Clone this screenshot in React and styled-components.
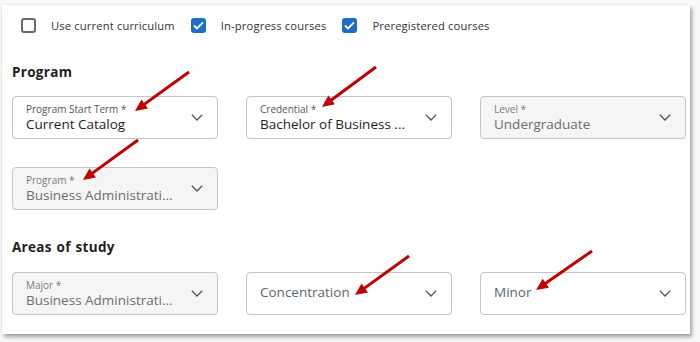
import React from "react";
import styled, { createGlobalStyle } from "styled-components";

const Global = createGlobalStyle`
  html, body { margin: 0; padding: 0; background: #f8f8f8; }
  body { font-family: "Open Sans", "Noto Sans", sans-serif; }
`;

const Stage = styled.div`
  position: relative;
  width: 700px;
  height: 342px;
  overflow: hidden;
  padding: 5px 0 0 2px;
  box-sizing: border-box;
`;

const Card = styled.div`
  width: 688px;
  height: 329px;
  box-sizing: border-box;
  background: #fff;
  box-shadow: 2px 3px 4px rgba(0, 0, 0, 0.35), 0 0 2px rgba(0, 0, 0, 0.08);
  padding: 12px 0 0 10px;
  display: flex;
  flex-direction: column;
`;

const CheckRow = styled.div`
  display: flex;
  align-items: center;
  height: 16px;
  padding-left: 9px;
`;

const CheckItem = styled.label`
  display: flex;
  align-items: center;
  gap: 15px;
  margin-right: 16px;
  font-size: 11.2px;
  color: #333;
  letter-spacing: 0.15px;
`;

const Box = styled.span`
  width: 15px;
  height: 15px;
  box-sizing: border-box;
  border-radius: 3px;
  display: flex;
  align-items: center;
  justify-content: center;
  background: ${(p) => (p.$checked ? "#1b6ec2" : "#fff")};
  border: ${(p) => (p.$checked ? "none" : "2px solid #6a6a6a")};
`;

const Heading = styled.h2`
  margin: ${(p) => p.$top}px 0 0 0;
  font-size: 13.5px;
  line-height: 18px;
  font-weight: 700;
  color: #1e1e1e;
  letter-spacing: 0.3px;
  word-spacing: 1px;
`;

const Grid = styled.div`
  display: grid;
  grid-template-columns: repeat(3, 206px);
  column-gap: 28px;
  row-gap: 28px;
  margin-top: ${(p) => p.$top}px;
`;

const Select = styled.div`
  height: 43px;
  box-sizing: border-box;
  border: 1px solid #c4c4c4;
  border-radius: 4px;
  background: ${(p) => (p.$disabled ? "#f5f5f5" : "#fff")};
  display: flex;
  align-items: center;
  padding: 0 14px 0 13px;
`;

const Texts = styled.div`
  flex: 1;
  min-width: 0;
  display: flex;
  flex-direction: column;
  justify-content: center;
  padding-bottom: ${(p) => (p.$single ? 3 : 0)}px;
`;

const Label = styled.span`
  font-size: 10px;
  line-height: 12px;
  color: ${(p) => (p.$disabled ? "#7a7a7a" : "#555")};
  margin-top: 1px;
`;

const Value = styled.span`
  font-size: 13.5px;
  line-height: 18px;
  color: ${(p) => (p.$disabled ? "#6e6e6e" : p.$placeholder ? "#5d6670" : "#1e1e1e")};
  white-space: nowrap;
  overflow: hidden;
`;

const Overlay = styled.svg`
  position: absolute;
  left: 0;
  top: 0;
  pointer-events: none;
`;

const Check = () => (
  <svg width="11" height="9" viewBox="0 0 11 9">
    <path d="M1 4.5 L4 7.5 L10 1.3" fill="none" stroke="#fff" strokeWidth="1.8" />
  </svg>
);

const Chevron = () => (
  <svg width="12" height="7" viewBox="0 0 12 7">
    <path d="M0.8 0.8 L6 6 L11.2 0.8" fill="none" stroke="#555" strokeWidth="1.3" />
  </svg>
);

const Field = ({ label, value, disabled, placeholder }) => (
  <Select $disabled={disabled}>
    <Texts $single={!label}>
      {label && <Label $disabled={disabled}>{label}</Label>}
      <Value $disabled={disabled} $placeholder={placeholder}>
        {value}
      </Value>
    </Texts>
    <Chevron />
  </Select>
);

const arrows = [
  [189, 72, 135, 111],
  [376, 67, 322, 107],
  [138, 140, 83, 180],
  [409, 256, 355, 295],
  [592, 251, 536, 290],
];

const Arrow = ({ a }) => {
  const [x1, y1, x2, y2] = a;
  const dx = x2 - x1;
  const dy = y2 - y1;
  const len = Math.hypot(dx, dy);
  const ux = dx / len;
  const uy = dy / len;
  const hl = 12;
  const hw = 5.5;
  const bx = x2 - ux * hl;
  const by = y2 - uy * hl;
  const px = -uy;
  const py = ux;
  const pts = `${x2},${y2} ${bx + px * hw},${by + py * hw} ${bx - px * hw},${by - py * hw}`;
  return (
    <g>
      <line x1={x1} y1={y1} x2={bx + ux * 2} y2={by + uy * 2} stroke="#c00000" strokeWidth="3" />
      <polygon points={pts} fill="#c00000" />
    </g>
  );
};

export default function App() {
  return (
    <>
      <Global />
      <Stage>
        <Card>
          <CheckRow>
            <CheckItem>
              <Box />
              Use current curriculum
            </CheckItem>
            <CheckItem>
              <Box $checked>
                <Check />
              </Box>
              In-progress courses
            </CheckItem>
            <CheckItem>
              <Box $checked>
                <Check />
              </Box>
              Preregistered courses
            </CheckItem>
          </CheckRow>
          <Heading $top={30}>Program</Heading>
          <Grid $top={15}>
            <Field label="Program Start Term *" value="Current Catalog" />
            <Field label="Credential *" value="Bachelor of Business ..." />
            <Field label="Level *" value="Undergraduate" disabled />
            <Field label="Program *" value="Business Administrati..." disabled />
          </Grid>
          <Heading $top={28}>Areas of study</Heading>
          <Grid $top={16}>
            <Field label="Major *" value="Business Administrati..." disabled />
            <Field value="Concentration" placeholder />
            <Field value="Minor" placeholder />
          </Grid>
        </Card>
        <Overlay width="700" height="342" viewBox="0 0 700 342">
          {arrows.map((a, i) => (
            <Arrow key={i} a={a} />
          ))}
        </Overlay>
      </Stage>
    </>
  );
}
